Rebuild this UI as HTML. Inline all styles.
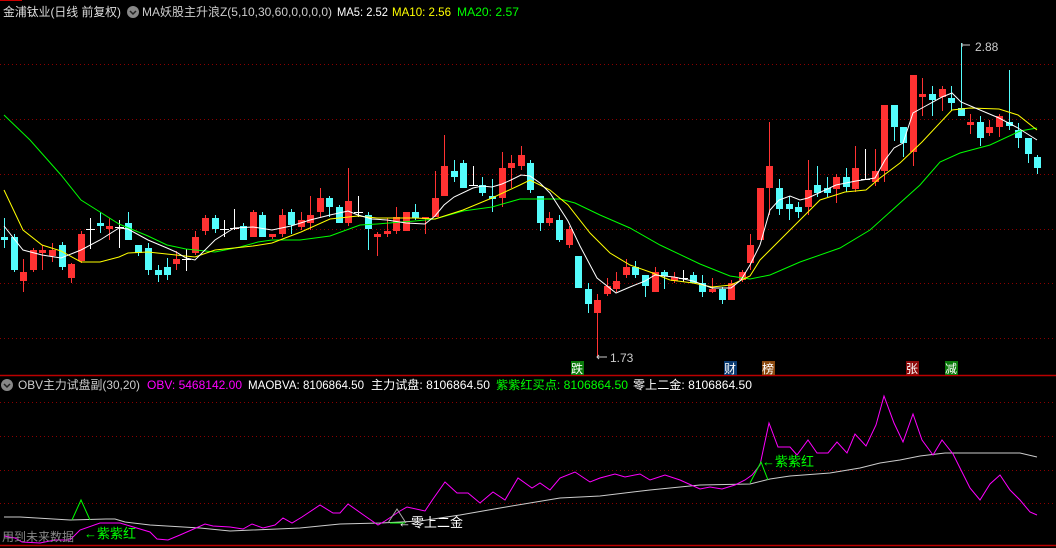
<!DOCTYPE html>
<html><head><meta charset="utf-8"><style>
html,body{margin:0;padding:0;background:#000;width:1056px;height:548px;overflow:hidden}
svg{display:block}
text{font-family:"Liberation Sans","Noto Sans CJK SC",sans-serif;font-size:12px}
</style></head><body>
<svg width="1056" height="548" viewBox="0 0 1056 548" xmlns="http://www.w3.org/2000/svg">
<rect width="1056" height="548" fill="#000"/>
<line x1="0" y1="0.5" x2="22" y2="0.5" stroke="#c00" stroke-width="1"/>
<g stroke="#8b0000" stroke-dasharray="1,3" stroke-width="1">
<line x1="0" y1="64.5" x2="1056" y2="64.5"/><line x1="0" y1="119.5" x2="1056" y2="119.5"/><line x1="0" y1="174.5" x2="1056" y2="174.5"/><line x1="0" y1="229.5" x2="1056" y2="229.5"/><line x1="0" y1="283.5" x2="1056" y2="283.5"/><line x1="0" y1="338.5" x2="1056" y2="338.5"/>
<line x1="0" y1="402.5" x2="1056" y2="402.5"/><line x1="0" y1="436.5" x2="1056" y2="436.5"/><line x1="0" y1="470.5" x2="1056" y2="470.5"/><line x1="0" y1="503.5" x2="1056" y2="503.5"/>
</g>
<line x1="0" y1="375.5" x2="1056" y2="375.5" stroke="#b00" stroke-width="1.5"/>
<line x1="0" y1="545.5" x2="1056" y2="545.5" stroke="#b00" stroke-width="1.5"/>

<text x="3" y="16" fill="#ddd" textLength="118" lengthAdjust="spacingAndGlyphs">金浦钛业(日线 前复权)</text>
<circle cx="133" cy="12" r="6" fill="#888"/><path d="M130 11l3 3 3-3" stroke="#222" stroke-width="1.5" fill="none"/>
<text x="142" y="16" fill="#ccc" textLength="190" lengthAdjust="spacingAndGlyphs">MA妖股主升浪Z(5,10,30,60,0,0,0,0)</text>
<text x="337" y="16" fill="#fff" textLength="51" lengthAdjust="spacingAndGlyphs">MA5: 2.52</text>
<text x="392" y="16" fill="#ff0" textLength="59" lengthAdjust="spacingAndGlyphs">MA10: 2.56</text>
<text x="457" y="16" fill="#0f0" textLength="62" lengthAdjust="spacingAndGlyphs">MA20: 2.57</text>

<g stroke-width="1">
<g stroke="#54fcfc">
<line x1="4.5" y1="218" x2="4.5" y2="248"/><line x1="14.5" y1="234" x2="14.5" y2="272"/><line x1="62.5" y1="242" x2="62.5" y2="270"/><line x1="100.5" y1="212" x2="100.5" y2="233"/><line x1="128.5" y1="212" x2="128.5" y2="240"/><line x1="138.5" y1="245" x2="138.5" y2="256"/><line x1="148.5" y1="243" x2="148.5" y2="275"/><line x1="158.5" y1="265" x2="158.5" y2="282"/><line x1="167.5" y1="258" x2="167.5" y2="280"/><line x1="215.5" y1="215" x2="215.5" y2="233"/><line x1="243.5" y1="223" x2="243.5" y2="240"/><line x1="262.5" y1="212" x2="262.5" y2="237"/><line x1="291.5" y1="209" x2="291.5" y2="234"/><line x1="329.5" y1="196" x2="329.5" y2="217"/><line x1="339.5" y1="205" x2="339.5" y2="223"/><line x1="368.5" y1="212" x2="368.5" y2="250"/><line x1="415.5" y1="204" x2="415.5" y2="220"/><line x1="454.5" y1="160" x2="454.5" y2="182"/><line x1="463.5" y1="160" x2="463.5" y2="188"/><line x1="482.5" y1="177" x2="482.5" y2="196"/><line x1="492.5" y1="179" x2="492.5" y2="212"/><line x1="530.5" y1="160" x2="530.5" y2="193"/><line x1="540.5" y1="196" x2="540.5" y2="231"/><line x1="559.5" y1="215" x2="559.5" y2="242"/><line x1="578.5" y1="256" x2="578.5" y2="288"/><line x1="588.5" y1="283" x2="588.5" y2="313"/><line x1="635.5" y1="261" x2="635.5" y2="278"/><line x1="645.5" y1="275" x2="645.5" y2="297"/><line x1="664.5" y1="270" x2="664.5" y2="289"/><line x1="693.5" y1="272" x2="693.5" y2="283"/><line x1="702.5" y1="275" x2="702.5" y2="297"/><line x1="722.5" y1="287" x2="722.5" y2="304"/><line x1="779.5" y1="179" x2="779.5" y2="215"/><line x1="789.5" y1="196" x2="789.5" y2="220"/><line x1="798.5" y1="202" x2="798.5" y2="218"/><line x1="817.5" y1="166" x2="817.5" y2="197"/><line x1="827.5" y1="177" x2="827.5" y2="197"/><line x1="846.5" y1="168" x2="846.5" y2="192"/><line x1="894.5" y1="105" x2="894.5" y2="141"/><line x1="903.5" y1="127" x2="903.5" y2="157"/><line x1="932.5" y1="86" x2="932.5" y2="116"/><line x1="951.5" y1="86" x2="951.5" y2="111"/><line x1="961.5" y1="43" x2="961.5" y2="116"/><line x1="980.5" y1="116" x2="980.5" y2="146"/><line x1="1009.5" y1="70" x2="1009.5" y2="130"/><line x1="1018.5" y1="123" x2="1018.5" y2="148"/><line x1="1028.5" y1="138" x2="1028.5" y2="163"/><line x1="1037.5" y1="155" x2="1037.5" y2="174"/>
</g>
<g stroke="#ff3232">
<line x1="23.5" y1="259" x2="23.5" y2="292"/><line x1="33.5" y1="248" x2="33.5" y2="272"/><line x1="42.5" y1="245" x2="42.5" y2="270"/><line x1="52.5" y1="243" x2="52.5" y2="262"/><line x1="71.5" y1="263" x2="71.5" y2="283"/><line x1="81.5" y1="231" x2="81.5" y2="263"/><line x1="109.5" y1="218" x2="109.5" y2="240"/><line x1="176.5" y1="251" x2="176.5" y2="270"/><line x1="195.5" y1="231" x2="195.5" y2="255"/><line x1="205.5" y1="215" x2="205.5" y2="235"/><line x1="253.5" y1="210" x2="253.5" y2="237"/><line x1="272.5" y1="234" x2="272.5" y2="239"/><line x1="282.5" y1="209" x2="282.5" y2="237"/><line x1="301.5" y1="212" x2="301.5" y2="230"/><line x1="310.5" y1="196" x2="310.5" y2="230"/><line x1="320.5" y1="188" x2="320.5" y2="217"/><line x1="348.5" y1="168" x2="348.5" y2="226"/><line x1="377.5" y1="232" x2="377.5" y2="256"/><line x1="387.5" y1="218" x2="387.5" y2="237"/><line x1="396.5" y1="207" x2="396.5" y2="234"/><line x1="406.5" y1="212" x2="406.5" y2="231"/><line x1="425.5" y1="218" x2="425.5" y2="234"/><line x1="435.5" y1="171" x2="435.5" y2="217"/><line x1="444.5" y1="135" x2="444.5" y2="196"/><line x1="502.5" y1="152" x2="502.5" y2="207"/><line x1="511.5" y1="155" x2="511.5" y2="188"/><line x1="521.5" y1="146" x2="521.5" y2="170"/><line x1="549.5" y1="212" x2="549.5" y2="226"/><line x1="569.5" y1="226" x2="569.5" y2="248"/><line x1="597.5" y1="294" x2="597.5" y2="357"/><line x1="607.5" y1="278" x2="607.5" y2="296"/><line x1="616.5" y1="272" x2="616.5" y2="292"/><line x1="626.5" y1="259" x2="626.5" y2="278"/><line x1="655.5" y1="267" x2="655.5" y2="292"/><line x1="674.5" y1="272" x2="674.5" y2="283"/><line x1="712.5" y1="278" x2="712.5" y2="293"/><line x1="731.5" y1="280" x2="731.5" y2="300"/><line x1="742.5" y1="270" x2="742.5" y2="282"/><line x1="750.5" y1="234" x2="750.5" y2="270"/><line x1="760.5" y1="188" x2="760.5" y2="240"/><line x1="769.5" y1="122" x2="769.5" y2="215"/><line x1="808.5" y1="160" x2="808.5" y2="215"/><line x1="836.5" y1="174" x2="836.5" y2="203"/><line x1="855.5" y1="146" x2="855.5" y2="192"/><line x1="875.5" y1="149" x2="875.5" y2="186"/><line x1="884.5" y1="105" x2="884.5" y2="182"/><line x1="913.5" y1="75" x2="913.5" y2="166"/><line x1="922.5" y1="78" x2="922.5" y2="116"/><line x1="942.5" y1="86" x2="942.5" y2="111"/><line x1="970.5" y1="114" x2="970.5" y2="134"/><line x1="989.5" y1="120" x2="989.5" y2="136"/><line x1="999.5" y1="114" x2="999.5" y2="137"/>
</g>
<g stroke="#fff">
<line x1="90.5" y1="218" x2="90.5" y2="249"/><line x1="86" y1="229.5" x2="95" y2="229.5"/>
<line x1="119.5" y1="220" x2="119.5" y2="248"/><line x1="115" y1="227.5" x2="124" y2="227.5"/>
<line x1="186.5" y1="249" x2="186.5" y2="271"/><line x1="182" y1="259.5" x2="191" y2="259.5"/>
<line x1="224.5" y1="220" x2="224.5" y2="237"/><line x1="220" y1="229.5" x2="229" y2="229.5"/>
<line x1="234.5" y1="209" x2="234.5" y2="230"/><line x1="230" y1="228.5" x2="239" y2="228.5"/>
<line x1="358.5" y1="196" x2="358.5" y2="217"/><line x1="354" y1="212.5" x2="363" y2="212.5"/>
<line x1="473.5" y1="166" x2="473.5" y2="186"/><line x1="469" y1="185.5" x2="478" y2="185.5"/>
<line x1="683.5" y1="270" x2="683.5" y2="282"/><line x1="679" y1="278.5" x2="688" y2="278.5"/>
<line x1="865.5" y1="149" x2="865.5" y2="180"/><line x1="861" y1="179.5" x2="870" y2="179.5"/>
</g>
</g>
<g fill="#54fcfc">
<rect x="1" y="237" width="7" height="3"/><rect x="11" y="237" width="7" height="33"/><rect x="59" y="245" width="7" height="22"/><rect x="97" y="223" width="7" height="3"/><rect x="125" y="223" width="7" height="17"/><rect x="135" y="245" width="7" height="8"/><rect x="145" y="248" width="7" height="22"/><rect x="155" y="270" width="7" height="5"/><rect x="164" y="267" width="7" height="8"/><rect x="212" y="218" width="7" height="11"/><rect x="240" y="226" width="7" height="14"/><rect x="259" y="215" width="7" height="22"/><rect x="288" y="212" width="7" height="13"/><rect x="326" y="198" width="7" height="9"/><rect x="336" y="207" width="7" height="16"/><rect x="365" y="215" width="7" height="14"/><rect x="412" y="212" width="7" height="6"/><rect x="451" y="171" width="7" height="6"/><rect x="460" y="163" width="7" height="25"/><rect x="479" y="185" width="7" height="8"/><rect x="489" y="196" width="7" height="3"/><rect x="527" y="163" width="7" height="27"/><rect x="537" y="196" width="7" height="27"/><rect x="556" y="220" width="7" height="20"/><rect x="575" y="256" width="7" height="32"/><rect x="585" y="289" width="7" height="15"/><rect x="632" y="267" width="7" height="8"/><rect x="642" y="275" width="7" height="11"/><rect x="661" y="272" width="7" height="4"/><rect x="690" y="275" width="7" height="8"/><rect x="699" y="283" width="7" height="9"/><rect x="719" y="289" width="7" height="11"/><rect x="776" y="188" width="7" height="21"/><rect x="786" y="204" width="7" height="5"/><rect x="795" y="207" width="7" height="5"/><rect x="814" y="185" width="7" height="8"/><rect x="824" y="188" width="7" height="5"/><rect x="843" y="177" width="7" height="10"/><rect x="891" y="105" width="7" height="22"/><rect x="900" y="127" width="7" height="16"/><rect x="929" y="94" width="7" height="6"/><rect x="948" y="98" width="7" height="5"/><rect x="958" y="108" width="7" height="8"/><rect x="977" y="122" width="7" height="16"/><rect x="1006" y="122" width="7" height="4"/><rect x="1015" y="130" width="7" height="8"/><rect x="1025" y="138" width="7" height="16"/><rect x="1034" y="157" width="7" height="11"/>
</g>
<g fill="#ff3232">
<rect x="20" y="272" width="7" height="9"/><rect x="30" y="250" width="7" height="20"/><rect x="39" y="250" width="7" height="3"/><rect x="49" y="250" width="7" height="6"/><rect x="68" y="264" width="7" height="14"/><rect x="78" y="234" width="7" height="27"/><rect x="106" y="226" width="7" height="3"/><rect x="173" y="259" width="7" height="5"/><rect x="192" y="237" width="7" height="16"/><rect x="202" y="218" width="7" height="13"/><rect x="250" y="212" width="7" height="25"/><rect x="269" y="234" width="7" height="3"/><rect x="279" y="215" width="7" height="19"/><rect x="298" y="220" width="7" height="7"/><rect x="307" y="215" width="7" height="8"/><rect x="317" y="198" width="7" height="14"/><rect x="345" y="201" width="7" height="22"/><rect x="374" y="234" width="7" height="3"/><rect x="384" y="231" width="7" height="3"/><rect x="393" y="217" width="7" height="14"/><rect x="403" y="212" width="7" height="19"/><rect x="422" y="217" width="7" height="2"/><rect x="432" y="198" width="7" height="19"/><rect x="441" y="166" width="7" height="30"/><rect x="499" y="168" width="7" height="30"/><rect x="508" y="163" width="7" height="5"/><rect x="518" y="155" width="7" height="11"/><rect x="546" y="218" width="7" height="5"/><rect x="566" y="229" width="7" height="16"/><rect x="594" y="300" width="7" height="13"/><rect x="604" y="286" width="7" height="8"/><rect x="613" y="281" width="7" height="8"/><rect x="623" y="267" width="7" height="8"/><rect x="652" y="272" width="7" height="20"/><rect x="671" y="277" width="7" height="4"/><rect x="709" y="289" width="7" height="3"/><rect x="728" y="283" width="7" height="17"/><rect x="739" y="272" width="7" height="8"/><rect x="747" y="245" width="7" height="18"/><rect x="757" y="188" width="7" height="52"/><rect x="766" y="166" width="7" height="22"/><rect x="805" y="190" width="7" height="17"/><rect x="833" y="177" width="7" height="12"/><rect x="852" y="168" width="7" height="21"/><rect x="872" y="171" width="7" height="11"/><rect x="881" y="105" width="7" height="66"/><rect x="910" y="75" width="7" height="77"/><rect x="919" y="94" width="7" height="3"/><rect x="939" y="89" width="7" height="8"/><rect x="967" y="122" width="7" height="3"/><rect x="986" y="127" width="7" height="6"/><rect x="996" y="116" width="7" height="11"/>
</g>
<polyline fill="none" stroke="#0f0" stroke-width="1" points="4,115 30,140 61,175 81,200 100,212 119,224 148,236 167,245 186,249 215,252 240,247 258,242 272,240 300,240 330,236 360,225 377,224 415,221 435,219 463,211 492,207 520,199 540,199 560,199 575,203 600,215 630,228 660,245 700,264 730,276 750,279 770,275 800,262 840,248 870,230 900,203 920,185 940,162 960,153 990,145 1020,131 1037,128"/>
<polyline fill="none" stroke="#ff0" stroke-width="1" points="4,190 23,230 42,245 61,251 81,262 100,262 119,257 128,253 148,252 176,255 195,257 215,250 253,246 272,243 301,232 330,219 358,216 377,218 415,218 435,219 463,210 492,198 520,185 530,180 550,190 568,205 590,233 610,253 630,265 650,272 670,280 693,283 712,287 731,285 750,276 760,260 770,250 790,230 820,200 845,192 866,190 880,178 900,163 922,142 952,110 970,108 999,109 1018,115 1037,130"/>
<polyline fill="none" stroke="#fff" stroke-width="1" points="4,226 23,250 42,255 61,258 81,250 100,240 119,228 128,229 148,240 167,248 176,252 186,258 195,260 215,240 234,228 253,227 272,230 291,226 310,220 330,215 348,211 358,215 372,219 387,220 406,223 425,224 435,216 444,205 454,197 473,188 482,186 492,187 502,184 511,180 521,175 530,176 540,183 550,193 568,221 580,246 597,278 616,293 630,287 645,281 655,275 674,277 693,281 712,288 731,288 741,280 750,265 760,245 770,210 779,200 790,196 800,200 808,198 836,185 856,181 875,178 885,160 894,148 903,143 913,113 922,108 942,97 952,93 961,102 980,110 999,118 1018,128 1037,140"/>

<line x1="962" y1="43" x2="962" y2="47" stroke="#ccc"/><path d="M962 45h8" stroke="#ccc"/>
<text x="975" y="51" fill="#ccc">2.88</text>
<path d="M597 357h10M599 355l-2 2 2 2" stroke="#ccc" fill="none"/>
<text x="610" y="362" fill="#ccc">1.73</text>

<rect x="571" y="361" width="13" height="14" fill="#0a7a0a"/><text x="571" y="373" fill="#fff">跌</text>
<rect x="724" y="361" width="13" height="14" fill="#0a3a70"/><text x="724" y="373" fill="#fff">财</text>
<rect x="762" y="361" width="13" height="14" fill="#8b4a10"/><text x="762" y="373" fill="#fff">榜</text>
<rect x="906" y="361" width="13" height="14" fill="#8b0a0a"/><text x="906" y="373" fill="#fff">张</text>
<rect x="945" y="361" width="13" height="14" fill="#0a7a0a"/><text x="945" y="373" fill="#fff">减</text>

<circle cx="7" cy="385" r="6" fill="#888"/><path d="M4 384l3 3 3-3" stroke="#222" stroke-width="1.5" fill="none"/>
<text x="18" y="389" fill="#ccc" textLength="122" lengthAdjust="spacingAndGlyphs">OBV主力试盘副(30,20)</text>
<text x="147" y="389" fill="#f0f" textLength="95" lengthAdjust="spacingAndGlyphs">OBV: 5468142.00</text>
<text x="248" y="389" fill="#fff" textLength="116" lengthAdjust="spacingAndGlyphs">MAOBVA: 8106864.50</text>
<text x="371" y="389" fill="#fff" textLength="119" lengthAdjust="spacingAndGlyphs">主力试盘: 8106864.50</text>
<text x="496" y="389" fill="#0f0" textLength="132" lengthAdjust="spacingAndGlyphs">紫紫红买点: 8106864.50</text>
<text x="633" y="389" fill="#fff" textLength="119" lengthAdjust="spacingAndGlyphs">零上二金: 8106864.50</text>

<polyline fill="none" stroke="#ccc" stroke-width="1" points="4,517 20,517 70,520 106,519 115,519 125,522 150,525 200,528 230,531 300,528 340,524 380,523 420,521 460,515 500,508 560,498 600,496 650,490 700,485 750,484 770,479 790,476 830,473 860,468 880,463 900,460 920,456 945,453 1020,453 1037,457"/>
<polyline fill="none" stroke="#f0f" stroke-width="1" points="4,536 15,538 22,542 40,543 55,540 70,540 80,530 100,523 120,523 130,526 150,532 157,539 168,540 180,535 205,524 213,526 230,527 243,529 252,524 263,528 275,525 283,518 292,523 302,517 320,505 333,513 340,513 348,504 365,516 378,525 385,521 400,511 407,507 425,511 433,499 445,482 457,493 468,493 480,503 493,492 505,500 518,478 532,488 540,483 550,490 560,478 575,472 590,482 600,478 615,474 625,477 640,474 650,480 665,475 680,480 700,489 710,487 722,489 735,485 745,480 752,475 760,465 769,423 778,447 790,447 797,455 808,440 817,453 828,453 837,442 847,453 855,434 866,446 876,425 884,396 894,423 903,442 913,414 922,440 933,455 942,440 953,454 970,488 980,500 990,484 1000,475 1010,490 1020,500 1030,512 1037,515"/>
<polyline fill="none" stroke="#0f0" points="72,520 81,500 90,520"/>
<polyline fill="none" stroke="#aaa" points="388,523 397,509 406,523"/>
<line x1="390" y1="523" x2="405" y2="523" stroke="#0f0"/>
<polyline fill="none" stroke="#0f0" points="750,483 761,462 768,480"/>
<text x="84" y="538" fill="#0f0" style="font-size:13px">←紫紫红</text>
<text x="762" y="466" fill="#0f0" style="font-size:13px">←紫紫红</text>
<text x="398" y="527" fill="#fff" style="font-size:13px">←零上二金</text>
<text x="2" y="541" fill="#888">用到未来数据</text>
</svg>
</body></html>
